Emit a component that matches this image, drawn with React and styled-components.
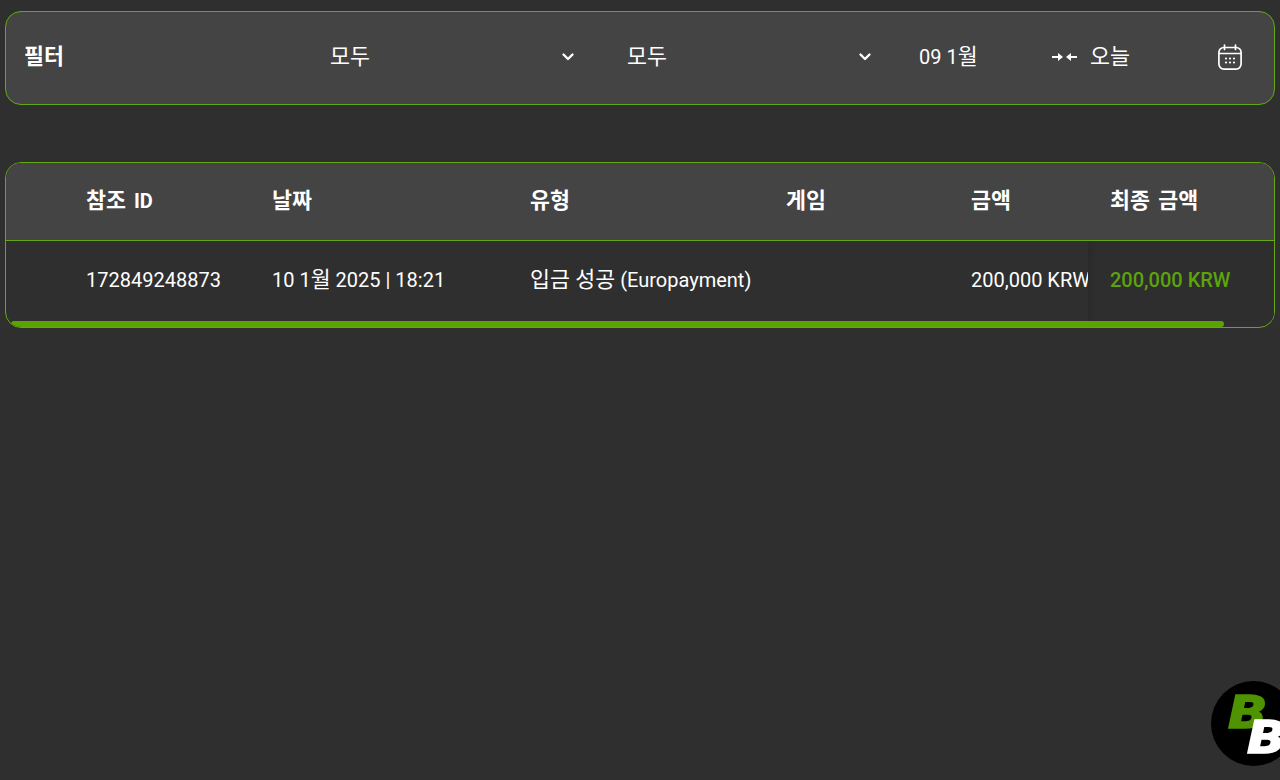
import React from 'react';
import styled, { createGlobalStyle } from 'styled-components';

const GREEN = '#64a814';
const FONT = `Roboto, "Noto Sans CJK KR", sans-serif`;

const GlobalStyle = createGlobalStyle`
  html, body {
    margin: 0;
    height: 100%;
    background: #2f2f2f;
  }
  * { box-sizing: border-box; }
  body {
    color: #fff;
    font-family: ${FONT};
    font-size: 20px;
    line-height: 24px;
    overflow: hidden;
  }
`;

// hangul sits a bit wider than the latin text next to it
const Ko = styled.span`
  font-size: 21.7px;
  line-height: 1;
`;

const Page = styled.div`
  padding: 11px 5px 0;
  display: flex;
  flex-direction: column;
  gap: 57px;
`;

const FilterBar = styled.div`
  height: 94px;
  padding-bottom: 2px;
  display: flex;
  align-items: center;
  background: #444444;
  border: 1px solid ${GREEN};
  border-radius: 16px;
`;

const FilterLabel = styled.div`
  width: 306px;
  padding-left: 18px;
  font-weight: 700;
`;

const Select = styled.div`
  width: 297px;
  padding: 0 34px 0 18px;
  display: flex;
  align-items: center;
  justify-content: space-between;
`;

const DateField = styled.div`
  flex: 1;
  padding: 0 32px 0 13px;
  display: flex;
  align-items: center;
`;

const DateStart = styled.span`
  width: 133px;
`;

const Today = styled.span`
  margin-left: 13px;
`;

const CalendarButton = styled.span`
  margin-left: auto;
  display: flex;
`;

const TableWrap = styled.div`
  height: 166px;
  background: #2f2f2f;
  border: 1px solid ${GREEN};
  border-radius: 16px;
  overflow: hidden;
`;

const Row = styled.div`
  display: grid;
  grid-template-columns: 266px 258px 256px 185px 117px 1fr;
  align-items: center;
`;

const HeadRow = styled(Row)`
  height: 78px;
  background: #444444;
  border-bottom: 1px solid ${GREEN};
  font-weight: 700;
  word-spacing: 3px;
`;

const BodyRow = styled(Row)`
  height: 80px;
`;

const Cell = styled.div`
  margin-bottom: 2px;
  white-space: nowrap;
  overflow: hidden;
  padding-left: ${(p) => (p.$first ? '80px' : '0')};
`;

const StickyCell = styled.div`
  height: 100%;
  padding: 0 0 2px 22px;
  display: flex;
  align-items: center;
  white-space: pre;
  color: ${(p) => (p.$accent ? '#5ca30c' : 'inherit')};
  font-weight: ${(p) => (p.$accent ? 500 : 'inherit')};
  background: ${(p) => (p.$accent ? 'linear-gradient(90deg, #2a2a2a 0, #2e2e2e 10px)' : 'transparent')};
`;

const ScrollTrack = styled.div`
  height: 6px;
  padding-left: 5px;
`;

const ScrollThumb = styled.div`
  width: 1213px;
  height: 6px;
  background: #5ba300;
  border-radius: 3px;
`;

const FloatingLogo = styled.svg`
  position: fixed;
  left: 1211px;
  top: 681px;
  width: 85px;
  height: 85px;
`;

const LogoLetter = styled.text`
  font-family: Roboto, sans-serif;
  font-size: 46px;
  font-weight: 900;
  font-style: italic;
  stroke-width: 1.5;
  fill: ${(p) => p.$color};
  stroke: ${(p) => p.$color};
`;

const Chevron = () => (
  <svg width="14" height="10" viewBox="0 0 14 10" fill="none">
    <path d="M2.500 2.500 7 7l4.500-4.500" stroke="#fff" strokeWidth="2.400" strokeLinecap="round" strokeLinejoin="round" />
  </svg>
);

const ArrowsIn = () => (
  <svg width="25" height="10" viewBox="0 0 25 10" fill="#fff">
    <path d="M0 4h6V1l5 4-5 4V6H0z" />
    <path d="M25 4h-6V1l-5 4 5 4V6h6z" />
  </svg>
);

const CalendarIcon = () => (
  <svg width="24" height="26" viewBox="0 0 24 26" fill="none" stroke="#fff" strokeWidth="1.700" strokeLinecap="round">
    <rect x="0.900" y="3.500" width="22.200" height="21.600" rx="5" />
    <path d="M6.500 1v4.500M17.500 1v4.500M1 9.500h22" />
    <g fill="#fff" stroke="none">
      <circle cx="8" cy="14.500" r="1.100" />
      <circle cx="12" cy="14.500" r="1.100" />
      <circle cx="16" cy="14.500" r="1.100" />
      <circle cx="8" cy="18.500" r="1.100" />
      <circle cx="12" cy="18.500" r="1.100" />
      <circle cx="16" cy="18.500" r="1.100" />
    </g>
  </svg>
);

export default function App() {
  return (
    <>
      <GlobalStyle />
      <Page>
        <FilterBar>
          <FilterLabel><Ko>필터</Ko></FilterLabel>
          <Select><Ko>모두</Ko><Chevron /></Select>
          <Select><Ko>모두</Ko><Chevron /></Select>
          <DateField>
            <DateStart>09 1<Ko>월</Ko></DateStart>
            <ArrowsIn />
            <Today><Ko>오늘</Ko></Today>
            <CalendarButton><CalendarIcon /></CalendarButton>
          </DateField>
        </FilterBar>

        <TableWrap>
          <HeadRow>
            <Cell $first><Ko>참조</Ko> ID</Cell>
            <Cell><Ko>날짜</Ko></Cell>
            <Cell><Ko>유형</Ko></Cell>
            <Cell><Ko>게임</Ko></Cell>
            <Cell><Ko>금액</Ko></Cell>
            <StickyCell><Ko>최종 금액</Ko></StickyCell>
          </HeadRow>
          <BodyRow>
            <Cell $first>172849248873</Cell>
            <Cell>10 1<Ko>월</Ko> 2025 | 18:21</Cell>
            <Cell><Ko>입금 성공</Ko> (Europayment)</Cell>
            <Cell />
            <Cell>200,000 KRW</Cell>
            <StickyCell $accent>200,000 KRW</StickyCell>
          </BodyRow>
          <ScrollTrack><ScrollThumb /></ScrollTrack>
        </TableWrap>
      </Page>

      <FloatingLogo viewBox="0 0 85 85">
        <circle cx="42.5" cy="42.5" r="42.5" fill="#000" />
        <LogoLetter transform="translate(18 47) scale(1.25 1)" $color="#4f9400">B</LogoLetter>
        <LogoLetter transform="translate(37 72) scale(1.25 1)" $color="#fff">B</LogoLetter>
      </FloatingLogo>
    </>
  );
}
